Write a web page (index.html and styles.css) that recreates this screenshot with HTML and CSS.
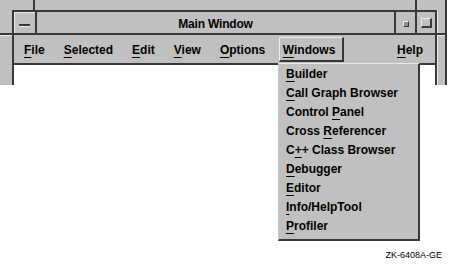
FILE: index.html
```html
<!DOCTYPE html>
<html lang="en">

<head>
  <meta charset="UTF-8">
  <meta name="viewport" content="width=device-width, initial-scale=1.0">
  <title>Main Window</title>
  <link rel="stylesheet" href="styles.css">
</head>

<body>
  <div class="screen">
    <div class="frame">
      <!-- resize corner marks on the frame -->
      <span class="tick tick-tl"></span>
      <span class="tick tick-tr"></span>
      <span class="tick tick-lt"></span>
      <span class="tick tick-rt"></span>

      <div class="window">
        <div class="titlebar">
          <div class="tb-btn menu-btn"><span class="dash"></span></div>
          <div class="title">Main Window</div>
          <div class="tb-btn min-btn"><span class="dot"></span></div>
          <div class="tb-btn max-btn"><span class="sq"></span></div>
        </div>
        <div class="menubar">
          <div class="item"><u>F</u>ile</div>
          <div class="item"><u>S</u>elected</div>
          <div class="item"><u>E</u>dit</div>
          <div class="item"><u>V</u>iew</div>
          <div class="item"><u>O</u>ptions</div>
          <div class="item active"><u>W</u>indows</div>
          <div class="item help"><u>H</u>elp</div>
        </div>
        <div class="content"></div>
      </div>
    </div>

    <ul class="dropdown">
      <li><u>B</u>uilder</li>
      <li><u>C</u>all Graph Browser</li>
      <li>Control <u>P</u>anel</li>
      <li>Cross <u>R</u>eferencer</li>
      <li>C<u>+</u>+ Class Browser</li>
      <li><u>D</u>ebugger</li>
      <li><u>E</u>ditor</li>
      <li><u>I</u>nfo/HelpTool</li>
      <li><u>P</u>rofiler</li>
    </ul>

    <div class="caption">ZK-6408A-GE</div>
  </div>
</body>

</html>
```

FILE: styles.css
```css
body {
  margin: 0;
  background: #fff;
  font-family: "Liberation Sans", Arial, sans-serif;
  font-weight: bold;
  font-size: 12px;
  color: #000;
}

.screen {
  position: relative;
  width: 450px;
  height: 265px;
  display: flex;
  flex-direction: column;
  overflow: hidden;
}

u {
  text-decoration: underline;
  text-decoration-thickness: 1px;
  text-underline-offset: 3px;
}

/* outer window manager frame */
.frame {
  position: relative;
  width: 447px;
  height: 85px;
  box-sizing: border-box;
  padding: 10px 8px 0 12px;
  background: #c0c0c0;
  border-right: 2px solid #383838;
  display: flex;
}

.tick {
  position: absolute;
  background: #383838;
}

.tick-tl {
  left: 33px;
  top: 0;
  width: 2px;
  height: 10px;
}

.tick-tr {
  left: 415px;
  top: 0;
  width: 2px;
  height: 10px;
}

.tick-lt {
  left: 0;
  top: 33px;
  width: 12px;
  height: 2px;
  box-shadow: 0 1px 0 #ececec;
}

.tick-rt {
  left: 437px;
  top: 33px;
  width: 8px;
  height: 2px;
  box-shadow: 0 1px 0 #ececec;
}

.window {
  flex: 1;
  display: flex;
  flex-direction: column;
  border: 2px solid #383838;
  border-bottom: none;
  box-shadow: 1px 0 0 #ececec;
}

/* title bar */
.titlebar {
  height: 21px;
  display: flex;
  border-bottom: 2px solid #383838;
  background: #c0c0c0;
}

.tb-btn {
  display: flex;
  align-items: center;
  justify-content: center;
  box-sizing: border-box;
}

.menu-btn {
  width: 23px;
  border-right: 2px solid #383838;
  box-shadow: inset 1px 1px 0 #ececec;
}

.menu-btn .dash {
  width: 11px;
  height: 2px;
  margin-top: 4px;
  background: #383838;
  box-shadow: 0 1px 0 #ececec;
}

.title {
  flex: 1;
  text-align: center;
  line-height: 17px;
  padding-top: 4px;
  letter-spacing: -0.2px;
}

.min-btn {
  width: 21px;
  border-left: 2px solid #383838;
}

.min-btn .dot {
  width: 4px;
  height: 4px;
  margin-top: 2px;
  background: #8a8a8a;
  border-right: 1px solid #383838;
  border-bottom: 1px solid #383838;
  border-top: 1px solid #ececec;
  border-left: 1px solid #ececec;
}

.max-btn {
  width: 20px;
  border-left: 2px solid #383838;
}

.max-btn .sq {
  width: 8px;
  height: 7px;
  border-top: 1px solid #ececec;
  border-left: 1px solid #ececec;
  border-right: 2px solid #383838;
  border-bottom: 2px solid #383838;
}

/* menu bar */
.menubar {
  height: 28px;
  display: flex;
  align-items: flex-start;
  border-bottom: 2px solid #383838;
  background: #c0c0c0;
}

.menubar .item {
  padding: 2px 9.5px 0;
  line-height: 26px;
}

.menubar .item:first-child {
  padding-left: 10px;
}

.menubar .active {
  margin: 2px 0 0 4px;
  padding: 2px 7px 0 3px;
  line-height: 20px;
  border-top: 1px solid #ececec;
  border-left: 1px solid #ececec;
  border-right: 2px solid #383838;
  border-bottom: 2px solid #383838;
}

.menubar .help {
  margin-left: auto;
  padding-right: 12px;
}

.content {
  flex: 1;
  background: #fff;
}

/* pulled down Windows menu */
.dropdown {
  position: absolute;
  left: 278px;
  top: 63px;
  width: 142px;
  box-sizing: border-box;
  margin: 0;
  padding: 1px 0 3px 7px;
  list-style: none;
  background: #c0c0c0;
  border-top: 1px solid #ececec;
  border-left: 1px solid #c8c8c8;
  border-right: 2px solid #383838;
  border-bottom: 2px solid #383838;
}

.dropdown li {
  line-height: 19px;
  white-space: nowrap;
}

.caption {
  margin-top: auto;
  margin-bottom: 4px;
  padding-right: 8px;
  text-align: right;
  font-weight: normal;
  font-size: 9px;
  line-height: 11px;
}
```
